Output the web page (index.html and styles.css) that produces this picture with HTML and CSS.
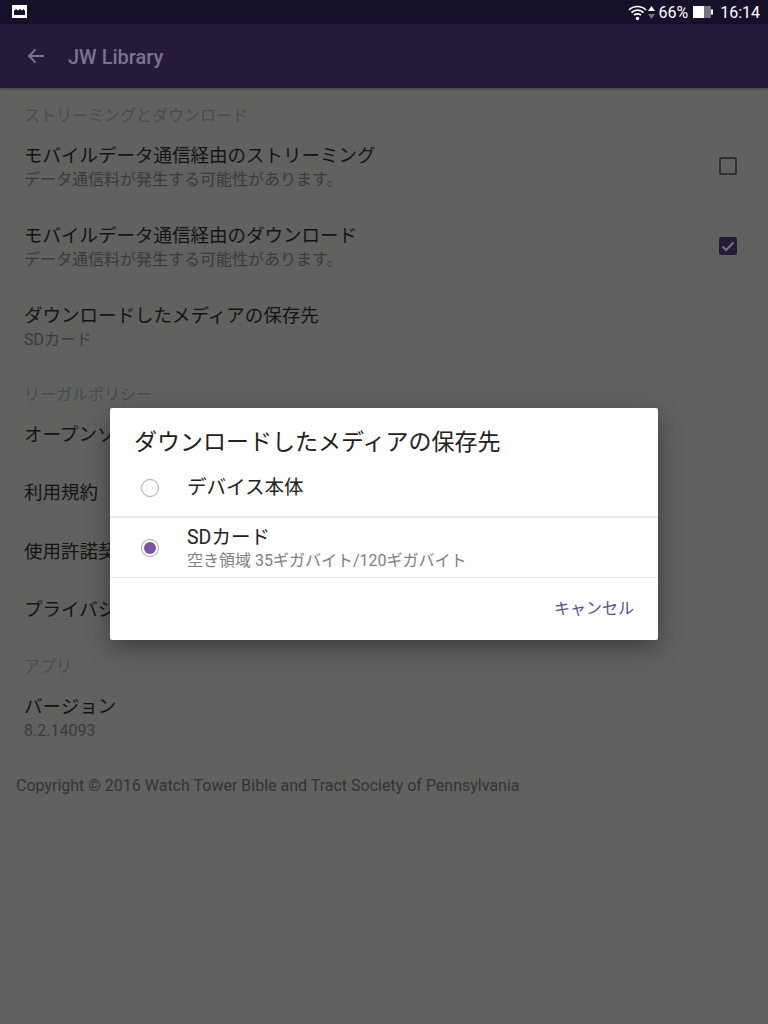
FILE: index.html
```html
<!DOCTYPE html>
<html lang="ja">
<head>
    <meta charset="UTF-8">
    <meta name="viewport" content="width=device-width, initial-scale=1.0">
    <title>JW Library</title>
    <link rel="stylesheet" href="styles.css">
</head>
<body>
    <div class="status-bar">
        <svg class="status-photo" width="15" height="13" viewBox="0 0 15 13">
            <rect width="15" height="13" fill="#ffffff"/>
            <path d="M2 10V6l2-2 2 1.500L8 4l2 1.500L11.500 4 13 6v4z" fill="#16102a"/>
        </svg>
        <div class="status-right">
            <svg width="19" height="17" viewBox="0 0 19 17">
                <path d="M1 6C5.700 1.300 13.300 1.300 18 6M3.500 8.600C6.800 5.400 12.200 5.400 15.500 8.600M6 11.100C7.900 9.400 11.100 9.400 13 11.100" fill="none" stroke="#ffffff" stroke-width="1.700"/>
                <circle cx="9.500" cy="14.500" r="1.700" fill="#ffffff"/>
            </svg>
            <svg class="status-arrows" width="7" height="13" viewBox="0 0 7 13">
                <path d="M3.500 0L7 5H0z" fill="#ffffff"/>
                <path d="M3.500 13L0 8h7z" fill="#77737f"/>
            </svg>
            <span class="status-text">66%</span>
            <svg class="status-battery" width="20" height="12" viewBox="0 0 20 12">
                <rect width="18" height="12" fill="#77737f"/>
                <rect width="11" height="12" fill="#ffffff"/>
                <rect x="18" y="3.500" width="2" height="5" fill="#ffffff"/>
            </svg>
            <span class="status-text status-time">16:14</span>
        </div>
    </div>

    <header class="app-bar">
        <svg width="18" height="16" viewBox="0 0 18 16">
            <path d="M17 8H2M8.500 1.500L2 8l6.500 6.500" fill="none" stroke="#79758a" stroke-width="1.800"/>
        </svg>
        <div class="app-title">JW Library</div>
    </header>

    <main class="settings">
        <h3 class="section-title section-first">ストリーミングとダウンロード</h3>
        <div class="row">
            <div>
                <div class="row-title">モバイルデータ通信経由のストリーミング</div>
                <div class="row-sub">データ通信料が発生する可能性があります。</div>
            </div>
            <span class="check"></span>
        </div>
        <div class="row">
            <div>
                <div class="row-title">モバイルデータ通信経由のダウンロード</div>
                <div class="row-sub">データ通信料が発生する可能性があります。</div>
            </div>
            <span class="check check-on">
                <svg width="18" height="18" viewBox="0 0 18 18">
                    <path d="M3.500 9.500L7.200 13 14.500 5.500" fill="none" stroke="#77737f" stroke-width="2"/>
                </svg>
            </span>
        </div>
        <div class="row">
            <div>
                <div class="row-title">ダウンロードしたメディアの保存先</div>
                <div class="row-sub">SDカード</div>
            </div>
        </div>

        <h3 class="section-title">リーガルポリシー</h3>
        <div class="row row-single"><div class="row-title">オープンソースライセンス</div></div>
        <div class="row row-single"><div class="row-title">利用規約</div></div>
        <div class="row row-single"><div class="row-title">使用許諾契約</div></div>
        <div class="row row-single"><div class="row-title">プライバシーポリシー</div></div>

        <h3 class="section-title">アプリ</h3>
        <div class="row">
            <div>
                <div class="row-title">バージョン</div>
                <div class="row-sub">8.2.14093</div>
            </div>
        </div>

        <p class="copyright">Copyright © 2016 Watch Tower Bible and Tract Society of Pennsylvania</p>
    </main>

    <!-- Dialog -->
    <div class="dialog">
        <div class="dialog-title">ダウンロードしたメディアの保存先</div>
        <div class="option option-first">
            <span class="radio"></span>
            <div class="option-label">デバイス本体</div>
        </div>
        <div class="option option-second">
            <span class="radio radio-on"></span>
            <div>
                <div class="option-label">SDカード</div>
                <div class="option-sub">空き領域 35ギガバイト/120ギガバイト</div>
            </div>
        </div>
        <div class="dialog-actions">
            <span class="dialog-button">キャンセル</span>
        </div>
    </div>
</body>
</html>
```

FILE: styles.css
```css
body {
    margin: 0;
    height: 1024px;
    overflow: hidden;
    position: relative;
    background-color: #61615f;
    font-family: Roboto, "Noto Sans CJK JP", sans-serif;
    color: #141414;
}

/* Top bars */
.status-bar {
    height: 24px;
    display: flex;
    justify-content: space-between;
    align-items: center;
    padding: 0 8px 0 12px;
    background-color: #17102a;
}

.status-photo {
    margin-bottom: 1px;
}

.status-right {
    display: flex;
    align-items: center;
}

.status-arrows {
    margin-left: 1px;
}

.status-text {
    margin-left: 3px;
    font-size: 16px;
    color: #ffffff;
}

.status-battery {
    margin-left: 5px;
}

.status-time {
    margin-left: 7px;
}

.app-bar {
    height: 64px;
    display: flex;
    align-items: center;
    gap: 23px;
    padding-left: 27px;
    background-color: #261a3a;
    box-shadow: 0 1px 3px rgba(0, 0, 0, 0.3);
}

.app-title {
    font-size: 20px;
    font-weight: 500;
    line-height: 26px;
    padding-top: 2px;
    color: #79758a;
}

/* Settings list */
.settings {
    padding: 0 24px;
}

.section-title {
    margin: 9px 0 0;
    height: 30px;
    line-height: 30px;
    font-size: 16px;
    font-weight: 400;
    color: #434c50;
}

.section-first {
    margin-top: 13px;
}

.row {
    height: 80px;
    box-sizing: border-box;
    display: flex;
    justify-content: space-between;
    align-items: flex-start;
    padding: 13px 7px 0 0;
}

.row-single {
    height: 58.330px;
    padding-top: 13px;
}

.row-title {
    font-size: 18.500px;
    line-height: 24px;
    color: #141414;
}

.row-sub {
    font-size: 16px;
    line-height: 24px;
    color: #3a3a3a;
}

.check {
    width: 14px;
    height: 14px;
    margin-top: 13px;
    border: 2px solid #303030;
    border-radius: 2px;
}

.check-on {
    background-color: #261a3a;
    border-color: #261a3a;
    position: relative;
}

.check-on svg {
    position: absolute;
    left: -2px;
    top: -2px;
}

.copyright {
    margin: 15px 0 0 -8px;
    font-size: 16px;
    line-height: 18px;
    color: #333333;
}

/* Dialog */
.dialog {
    position: absolute;
    left: 110px;
    top: 408px;
    width: 548px;
    height: 232px;
    border-radius: 2px;
    background-color: #ffffff;
    box-shadow: 0 8px 24px rgba(0, 0, 0, 0.38);
}

.dialog-title {
    padding: 20px 0 0 24px;
    height: 36px;
    line-height: 30px;
    font-size: 23px;
    color: #212121;
}

.option {
    display: flex;
    align-items: center;
    gap: 28px;
    padding-left: 31px;
    box-sizing: border-box;
}

.option-first {
    height: 54px;
    padding-bottom: 4px;
    border-bottom: 2px solid #e8e8e4;
}

.option-second {
    height: 60px;
    padding-top: 1px;
    border-bottom: 1px solid #e8e8e4;
}

.radio {
    width: 16px;
    height: 16px;
    border: 1px solid #a8a8a8;
    border-radius: 50%;
    box-sizing: content-box;
    position: relative;
}

.radio-on::after {
    content: "";
    position: absolute;
    left: 2px;
    top: 2px;
    width: 12px;
    height: 12px;
    border-radius: 50%;
    background-color: #7a52a8;
}

.option-label {
    font-size: 19.500px;
    line-height: 24px;
    color: #212121;
}

.option-sub {
    margin-top: 1px;
    font-size: 16px;
    line-height: 20px;
    color: #808080;
}

.dialog-actions {
    display: flex;
    justify-content: flex-end;
    padding: 20px 24px 0 0;
}

.dialog-button {
    font-size: 16px;
    line-height: 22px;
    color: #5f4a8b;
}
```
